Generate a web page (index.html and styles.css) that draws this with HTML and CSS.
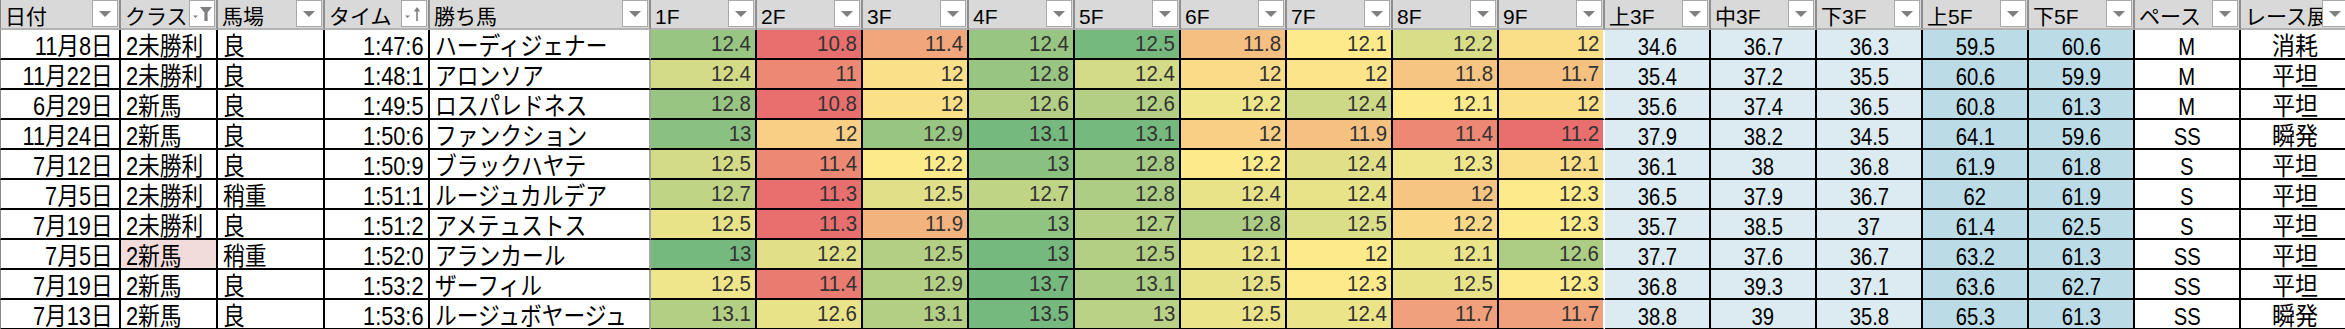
FILE: index.html
```html
<!DOCTYPE html>
<html lang="ja">
<head>
<meta charset="utf-8">
<title>レース一覧</title>
<link rel="stylesheet" href="styles.css">
</head>
<body>
<div class="sheet">
  <div class="hrow">
    <div class="h first"><span class="hl">日付</span><span class="dd plain"></span></div>
    <div class="h"><span class="hl">クラス</span><span class="dd"><svg viewBox="0 0 24 25" width="24" height="25"><polygon points="3,14.5 8,14.5 5.5,17" fill="#808080"/><polygon points="10,6 22,6 17.6,11.5 17.6,20 14.4,20 14.4,11.5" fill="#808080"/></svg></span></div>
    <div class="h"><span class="hl">馬場</span><span class="dd plain"></span></div>
    <div class="h"><span class="hl">タイム</span><span class="dd"><svg viewBox="0 0 24 25" width="24" height="25"><polygon points="3,14.5 8,14.5 5.5,17" fill="#808080"/><line x1="15" y1="20" x2="15" y2="8" stroke="#808080" stroke-width="1.6"/><polygon points="11.8,10.5 15,6 18.2,10.5" fill="#808080"/></svg></span></div>
    <div class="h"><span class="hl">勝ち馬</span><span class="dd plain"></span></div>
    <div class="h"><span class="hl">1F</span><span class="dd plain"></span></div>
    <div class="h"><span class="hl">2F</span><span class="dd plain"></span></div>
    <div class="h"><span class="hl">3F</span><span class="dd plain"></span></div>
    <div class="h"><span class="hl">4F</span><span class="dd plain"></span></div>
    <div class="h"><span class="hl">5F</span><span class="dd plain"></span></div>
    <div class="h"><span class="hl">6F</span><span class="dd plain"></span></div>
    <div class="h"><span class="hl">7F</span><span class="dd plain"></span></div>
    <div class="h"><span class="hl">8F</span><span class="dd plain"></span></div>
    <div class="h"><span class="hl">9F</span><span class="dd plain"></span></div>
    <div class="h"><span class="hl">上3F</span><span class="dd plain"></span></div>
    <div class="h"><span class="hl">中3F</span><span class="dd plain"></span></div>
    <div class="h"><span class="hl">下3F</span><span class="dd plain"></span></div>
    <div class="h"><span class="hl">上5F</span><span class="dd plain"></span></div>
    <div class="h"><span class="hl">下5F</span><span class="dd plain"></span></div>
    <div class="h"><span class="hl">ペース</span><span class="dd plain"></span></div>
    <div class="h"><span class="hl clip">レース展開</span><span class="dd plain"></span></div>
  </div>

  <div class="row">
    <div class="c date first"><span>11月8日</span></div><div class="c txt"><span>2未勝利</span></div><div class="c txt"><span>良</span></div><div class="c time"><span>1:47:6</span></div><div class="c txt horse"><span>ハーディジェナー</span></div>
    <div class="c f" style="background:#98c581"><span>12.4</span></div><div class="c f" style="background:#e86f6e"><span>10.8</span></div><div class="c f" style="background:#f1a67b"><span>11.4</span></div><div class="c f" style="background:#98c581"><span>12.4</span></div><div class="c f" style="background:#76b97e"><span>12.5</span></div><div class="c f" style="background:#f5bf81"><span>11.8</span></div><div class="c f" style="background:#fcea8b"><span>12.1</span></div><div class="c f" style="background:#d8dd88"><span>12.2</span></div><div class="c f f9" style="background:#fade88"><span>12</span></div>
    <div class="c num b1"><span>34.6</span></div><div class="c num b1"><span>36.7</span></div><div class="c num b1"><span>36.3</span></div><div class="c num b2"><span>59.5</span></div><div class="c num b2"><span>60.6</span></div>
    <div class="c num"><span>M</span></div><div class="c ctr"><span>消耗</span></div>
  </div>

  <div class="row">
    <div class="c date first"><span>11月22日</span></div><div class="c txt"><span>2未勝利</span></div><div class="c txt"><span>良</span></div><div class="c time"><span>1:48:1</span></div><div class="c txt horse"><span>アロンソア</span></div>
    <div class="c f" style="background:#d4db87"><span>12.4</span></div><div class="c f" style="background:#ec8874"><span>11</span></div><div class="c f" style="background:#fae089"><span>12</span></div><div class="c f" style="background:#98c581"><span>12.8</span></div><div class="c f" style="background:#d4db87"><span>12.4</span></div><div class="c f" style="background:#fadb88"><span>12</span></div><div class="c f" style="background:#fbe48a"><span>12</span></div><div class="c f" style="background:#f6c582"><span>11.8</span></div><div class="c f f9" style="background:#f5c181"><span>11.7</span></div>
    <div class="c num b1"><span>35.4</span></div><div class="c num b1"><span>37.2</span></div><div class="c num b1"><span>35.5</span></div><div class="c num b2"><span>60.6</span></div><div class="c num b2"><span>59.9</span></div>
    <div class="c num"><span>M</span></div><div class="c ctr"><span>平坦</span></div>
  </div>

  <div class="row">
    <div class="c date first"><span>6月29日</span></div><div class="c txt"><span>2新馬</span></div><div class="c txt"><span>良</span></div><div class="c time"><span>1:49:5</span></div><div class="c txt horse"><span>ロスパレドネス</span></div>
    <div class="c f" style="background:#98c581"><span>12.8</span></div><div class="c f" style="background:#e86f6e"><span>10.8</span></div><div class="c f" style="background:#fae089"><span>12</span></div><div class="c f" style="background:#b2cf84"><span>12.6</span></div><div class="c f" style="background:#b2cf84"><span>12.6</span></div><div class="c f" style="background:#efe58a"><span>12.2</span></div><div class="c f" style="background:#cdd986"><span>12.4</span></div><div class="c f" style="background:#fcea8b"><span>12.1</span></div><div class="c f f9" style="background:#fae089"><span>12</span></div>
    <div class="c num b1"><span>35.6</span></div><div class="c num b1"><span>37.4</span></div><div class="c num b1"><span>36.5</span></div><div class="c num b2"><span>60.8</span></div><div class="c num b2"><span>61.3</span></div>
    <div class="c num"><span>M</span></div><div class="c ctr"><span>平坦</span></div>
  </div>

  <div class="row">
    <div class="c date first"><span>11月24日</span></div><div class="c txt"><span>2新馬</span></div><div class="c txt"><span>良</span></div><div class="c time"><span>1:50:6</span></div><div class="c txt horse"><span>ファンクション</span></div>
    <div class="c f" style="background:#8ac080"><span>13</span></div><div class="c f" style="background:#f8cf85"><span>12</span></div><div class="c f" style="background:#98c581"><span>12.9</span></div><div class="c f" style="background:#76b97e"><span>13.1</span></div><div class="c f" style="background:#76b97e"><span>13.1</span></div><div class="c f" style="background:#f8cf85"><span>12</span></div><div class="c f" style="background:#f5c181"><span>11.9</span></div><div class="c f" style="background:#ec8874"><span>11.4</span></div><div class="c f f9" style="background:#e86f6e"><span>11.2</span></div>
    <div class="c num b1"><span>37.9</span></div><div class="c num b1"><span>38.2</span></div><div class="c num b1"><span>34.5</span></div><div class="c num b2"><span>64.1</span></div><div class="c num b2"><span>59.6</span></div>
    <div class="c num"><span>SS</span></div><div class="c ctr"><span>瞬発</span></div>
  </div>

  <div class="row">
    <div class="c date first"><span>7月12日</span></div><div class="c txt"><span>2未勝利</span></div><div class="c txt"><span>良</span></div><div class="c time"><span>1:50:9</span></div><div class="c txt horse"><span>ブラックハヤテ</span></div>
    <div class="c f" style="background:#d4db87"><span>12.5</span></div><div class="c f" style="background:#ec8874"><span>11.4</span></div><div class="c f" style="background:#fcea8b"><span>12.2</span></div><div class="c f" style="background:#8ac080"><span>13</span></div><div class="c f" style="background:#a5ca83"><span>12.8</span></div><div class="c f" style="background:#fcea8b"><span>12.2</span></div><div class="c f" style="background:#e1e088"><span>12.4</span></div><div class="c f" style="background:#efe58a"><span>12.3</span></div><div class="c f f9" style="background:#fade88"><span>12.1</span></div>
    <div class="c num b1"><span>36.1</span></div><div class="c num b1"><span>38</span></div><div class="c num b1"><span>36.8</span></div><div class="c num b2"><span>61.9</span></div><div class="c num b2"><span>61.8</span></div>
    <div class="c num"><span>S</span></div><div class="c ctr"><span>平坦</span></div>
  </div>

  <div class="row">
    <div class="c date first"><span>7月5日</span></div><div class="c txt"><span>2未勝利</span></div><div class="c txt"><span>稍重</span></div><div class="c time"><span>1:51:1</span></div><div class="c txt horse"><span>ルージュカルデア</span></div>
    <div class="c f" style="background:#c0d485"><span>12.7</span></div><div class="c f" style="background:#e86f6e"><span>11.3</span></div><div class="c f" style="background:#e1e088"><span>12.5</span></div><div class="c f" style="background:#c0d485"><span>12.7</span></div><div class="c f" style="background:#accd83"><span>12.8</span></div><div class="c f" style="background:#e8e389"><span>12.4</span></div><div class="c f" style="background:#e8e389"><span>12.4</span></div><div class="c f" style="background:#f6c582"><span>12</span></div><div class="c f f9" style="background:#fcea8b"><span>12.3</span></div>
    <div class="c num b1"><span>36.5</span></div><div class="c num b1"><span>37.9</span></div><div class="c num b1"><span>36.7</span></div><div class="c num b2"><span>62</span></div><div class="c num b2"><span>61.9</span></div>
    <div class="c num"><span>S</span></div><div class="c ctr"><span>平坦</span></div>
  </div>

  <div class="row">
    <div class="c date first"><span>7月19日</span></div><div class="c txt"><span>2未勝利</span></div><div class="c txt"><span>良</span></div><div class="c time"><span>1:51:2</span></div><div class="c txt horse"><span>アメテュストス</span></div>
    <div class="c f" style="background:#e8e389"><span>12.5</span></div><div class="c f" style="background:#e86f6e"><span>11.3</span></div><div class="c f" style="background:#f3b37e"><span>11.9</span></div><div class="c f" style="background:#91c381"><span>13</span></div><div class="c f" style="background:#b2cf84"><span>12.7</span></div><div class="c f" style="background:#accd83"><span>12.8</span></div><div class="c f" style="background:#dbde88"><span>12.5</span></div><div class="c f" style="background:#f9d887"><span>12.2</span></div><div class="c f f9" style="background:#fcea8b"><span>12.3</span></div>
    <div class="c num b1"><span>35.7</span></div><div class="c num b1"><span>38.5</span></div><div class="c num b1"><span>37</span></div><div class="c num b2"><span>61.4</span></div><div class="c num b2"><span>62.5</span></div>
    <div class="c num"><span>S</span></div><div class="c ctr"><span>平坦</span></div>
  </div>

  <div class="row">
    <div class="c date first"><span>7月5日</span></div><div class="c txt pink"><span>2新馬</span></div><div class="c txt"><span>稍重</span></div><div class="c time"><span>1:52:0</span></div><div class="c txt horse"><span>アランカール</span></div>
    <div class="c f" style="background:#76b97e"><span>13</span></div><div class="c f" style="background:#e1e088"><span>12.2</span></div><div class="c f" style="background:#b2cf84"><span>12.5</span></div><div class="c f" style="background:#76b97e"><span>13</span></div><div class="c f" style="background:#b2cf84"><span>12.5</span></div><div class="c f" style="background:#ece489"><span>12.1</span></div><div class="c f" style="background:#fcea8b"><span>12</span></div><div class="c f" style="background:#ece489"><span>12.1</span></div><div class="c f f9" style="background:#accd83"><span>12.6</span></div>
    <div class="c num b1"><span>37.7</span></div><div class="c num b1"><span>37.6</span></div><div class="c num b1"><span>36.7</span></div><div class="c num b2"><span>63.2</span></div><div class="c num b2"><span>61.3</span></div>
    <div class="c num"><span>SS</span></div><div class="c ctr"><span>平坦</span></div>
  </div>

  <div class="row">
    <div class="c date first"><span>7月19日</span></div><div class="c txt"><span>2新馬</span></div><div class="c txt"><span>良</span></div><div class="c time"><span>1:53:2</span></div><div class="c txt horse"><span>ザーフィル</span></div>
    <div class="c f" style="background:#efe58a"><span>12.5</span></div><div class="c f" style="background:#ea7b71"><span>11.4</span></div><div class="c f" style="background:#b2cf84"><span>12.9</span></div><div class="c f" style="background:#76b97e"><span>13.7</span></div><div class="c f" style="background:#accd83"><span>13.1</span></div><div class="c f" style="background:#e8e389"><span>12.5</span></div><div class="c f" style="background:#fcea8b"><span>12.3</span></div><div class="c f" style="background:#e8e389"><span>12.5</span></div><div class="c f f9" style="background:#fcea8b"><span>12.3</span></div>
    <div class="c num b1"><span>36.8</span></div><div class="c num b1"><span>39.3</span></div><div class="c num b1"><span>37.1</span></div><div class="c num b2"><span>63.6</span></div><div class="c num b2"><span>62.7</span></div>
    <div class="c num"><span>SS</span></div><div class="c ctr"><span>平坦</span></div>
  </div>

  <div class="row">
    <div class="c date first"><span>7月13日</span></div><div class="c txt"><span>2新馬</span></div><div class="c txt"><span>良</span></div><div class="c time"><span>1:53:6</span></div><div class="c txt horse"><span>ルージュボヤージュ</span></div>
    <div class="c f" style="background:#b2cf84"><span>13.1</span></div><div class="c f" style="background:#e8e389"><span>12.6</span></div><div class="c f" style="background:#b2cf84"><span>13.1</span></div><div class="c f" style="background:#76b97e"><span>13.5</span></div><div class="c f" style="background:#b9d285"><span>13</span></div><div class="c f" style="background:#ece489"><span>12.5</span></div><div class="c f" style="background:#ece489"><span>12.4</span></div><div class="c f" style="background:#f0a07a"><span>11.7</span></div><div class="c f f9" style="background:#f0a07a"><span>11.7</span></div>
    <div class="c num b1"><span>38.8</span></div><div class="c num b1"><span>39</span></div><div class="c num b1"><span>35.8</span></div><div class="c num b2"><span>65.3</span></div><div class="c num b2"><span>61.3</span></div>
    <div class="c num"><span>SS</span></div><div class="c ctr"><span>瞬発</span></div>
  </div>
</div>
</body>
</html>
```

FILE: styles.css
```css
html, body {
  margin: 0;
  padding: 0;
  background: #ffffff;
  overflow: hidden;
}

body {
  font-family: "Liberation Sans", "Noto Sans CJK JP", sans-serif;
  color: #000;
}

.sheet {
  display: grid;
  grid-template-columns: 121px 97px 107px 105px 221px repeat(15, 106px) 110px;
  grid-auto-rows: 30px;
  width: max-content;
}

.hrow,
.row {
  display: contents;
}

/* header */
.h {
  box-sizing: border-box;
  background: #d9d9d9;
  border-right: 2px solid #8e8e8e;
  border-bottom: 2px solid #b3b3b3;
  display: flex;
  align-items: flex-start;
  padding-left: 4px;
  padding-right: 1px;
}

.hl {
  flex: 1 1 auto;
  min-width: 0;
  padding-top: 6px;
  white-space: nowrap;
  font-family: "Liberation Sans", "Noto Sans CJK JP", sans-serif;
  font-size: 21px;
  line-height: 22px;
}

.hl.clip {
  overflow: hidden;
}

.dd {
  flex: none;
  width: 26px;
  height: 27px;
  box-sizing: border-box;
  border: 1px solid #a8a8a8;
  background: #ffffff;
  display: flex;
  align-items: center;
  justify-content: center;
}

.dd svg {
  display: block;
}

.dd.plain::after {
  content: "";
  width: 0;
  height: 0;
  border-left: 6px solid transparent;
  border-right: 6px solid transparent;
  border-top: 6px solid #808080;
  margin-top: 1px;
}

/* data cells */
.c {
  box-sizing: border-box;
  border-right: 2px solid #000;
  border-bottom: 2px solid #000;
  background: #ffffff;
  white-space: nowrap;
  font-family: "Liberation Sans", "Noto Sans CJK JP", sans-serif;
  font-size: 25px;
  line-height: 24px;
  padding-top: 4px;
}

.c > span {
  display: inline-block;
  transform: scaleX(0.87);
  transform-origin: left center;
}

.first {
  border-left: 1px solid #8a8a8a;
}

.date {
  text-align: right;
  padding-right: 6px;
}

.time {
  text-align: right;
  padding-right: 4px;
}

.date > span,
.time > span {
  transform-origin: right center;
}

.txt {
  text-align: left;
  padding-left: 5px;
}

.horse {
  border-right-color: #a6a6a6;
}

.pink {
  background: #f2dcdb;
}

.f {
  text-align: right;
  padding-right: 4px;
  padding-top: 0;
  font-size: 22px;
  line-height: 28px;
  color: #333333;
}

.f > span {
  transform: scaleX(0.93);
  transform-origin: right center;
}

.f9 {
  border-right-color: #ffffff;
}

.num {
  text-align: center;
  font-size: 23px;
  padding-top: 5px;
}

.num > span {
  transform: scaleX(0.88);
  transform-origin: center center;
}

.ctr {
  text-align: center;
}

.ctr > span {
  transform: scaleX(0.92);
  transform-origin: center center;
}

.b1 {
  background: #dcebf2;
}

.b2 {
  background: #bbdbe6;
}
```
